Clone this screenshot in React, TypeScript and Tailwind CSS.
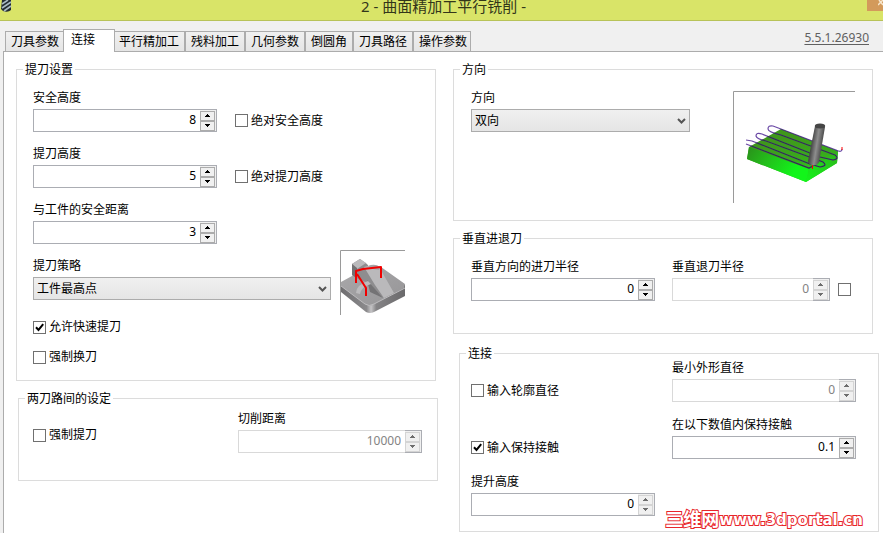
import { useId, useState } from 'react';
import type { ReactNode } from 'react';

const TABS = ['刀具参数', '连接', '平行精加工', '残料加工', '几何参数', '倒圆角', '刀具路径', '操作参数'];

function Group({ title, className = '', children }: { title: string; className?: string; children: ReactNode }) {
  return (
    <fieldset className={`min-w-0 border border-[#dcdcdc] ${className}`}>
      <legend className="ml-1.5 px-0.5 leading-[17px]">{title}</legend>
      {children}
    </fieldset>
  );
}

function Arrow({ up = false }: { up?: boolean }) {
  return (
    <svg width="5" height="3" viewBox="0 0 5 3" fill="currentColor" shapeRendering="crispEdges" aria-hidden="true">
      <path d={up ? 'M2 0h1v1h1v1h1v1H0V2h1V1h1z' : 'M0 0h5v1H4v1H3v1H2V2H1V1H0z'} />
    </svg>
  );
}

type SpinProps = {
  label: string;
  initial: number;
  step?: number;
  disabled?: boolean;
  locked?: boolean;
  width?: string;
};

function SpinField({ label, initial, step = 1, disabled = false, locked = false, width = 'w-46' }: SpinProps) {
  const id = useId();
  const [value, setValue] = useState(String(initial));
  const off = disabled || locked;
  const bump = (d: number) => setValue((v) => String(Math.round(((parseFloat(v) || 0) + d) * 1000) / 1000));
  const button = `flex h-[10px] w-[15px] items-center justify-center border bg-[#f0f0f0] ${
    off ? 'border-[#d4d4d4] text-[#6d6d6d]' : 'border-[#acacac] text-black'
  }`;
  return (
    <div className="flex flex-col gap-[3px]">
      <label htmlFor={id}>{label}</label>
      <div className={`flex h-[23px] ${width}`}>
        <input
          id={id}
          type="text"
          inputMode="decimal"
          value={value}
          disabled={disabled}
          onChange={(e) => setValue(e.target.value)}
          className={`min-w-0 flex-1 border border-r-0 bg-white pr-1 pb-0.5 text-right outline-none ${
            disabled ? 'border-[#d9d9d9] text-[#838383]' : 'border-[#abadb3] text-black'
          }`}
        />
        <div className="flex flex-col justify-center border border-l-0 border-[#abadb3] bg-[#f0f0f0] pr-px">
          <button type="button" aria-label={`${label} +`} disabled={off} onClick={() => bump(step)} className={button}>
            <Arrow up />
          </button>
          <button type="button" aria-label={`${label} -`} disabled={off} onClick={() => bump(-step)} className={button}>
            <Arrow />
          </button>
        </div>
      </div>
    </div>
  );
}

function SelectField({ label, options, width }: { label: string; options: string[]; width: string }) {
  const id = useId();
  return (
    <div className="flex flex-col gap-[3px]">
      <label htmlFor={id}>{label}</label>
      <div className={`relative h-[23px] ${width}`}>
        <select
          id={id}
          className="h-full w-full appearance-none border border-[#acacac] bg-linear-to-b from-[#f0f0f0] to-[#e5e5e5] pr-5 pl-[3px] text-black outline-none"
        >
          {options.map((o) => (
            <option key={o}>{o}</option>
          ))}
        </select>
        <svg
          className="pointer-events-none absolute top-[9px] right-1"
          width="9"
          height="6"
          viewBox="0 0 9 6"
          fill="none"
          stroke="#555"
          strokeWidth="2"
          aria-hidden="true"
        >
          <path d="M1 1l3.500 3.500L8 1" />
        </svg>
      </div>
    </div>
  );
}

function Check({ label, name, initial = false }: { label?: string; name?: string; initial?: boolean }) {
  const [on, setOn] = useState(initial);
  return (
    <label className="flex items-center gap-[3px]">
      <span className="relative flex size-[13px] shrink-0">
        <input
          type="checkbox"
          checked={on}
          aria-label={name}
          onChange={(e) => setOn(e.target.checked)}
          className="size-[13px] appearance-none border border-[#707070] bg-white"
        />
        {on && (
          <svg
            className="pointer-events-none absolute inset-0"
            width="13"
            height="13"
            viewBox="0 0 13 13"
            fill="none"
            stroke="#000"
            strokeWidth="2"
            aria-hidden="true"
          >
            <path d="M3 6.300L5.500 9L10.200 3.200" />
          </svg>
        )}
      </span>
      {label && <span>{label}</span>}
    </label>
  );
}

function RetractPicture() {
  return (
    <svg width="65" height="65" viewBox="0 0 65 65" className="shrink-0" role="img" aria-label="提刀策略">
      <defs>
        <linearGradient id="plate" x1="0" y1="0" x2="1" y2="1">
          <stop offset="0" stopColor="#a9a8aa" />
          <stop offset="1" stopColor="#969597" />
        </linearGradient>
        <linearGradient id="edge" x1="0" x2="1">
          <stop offset="0" stopColor="#6f6e70" />
          <stop offset="0.400" stopColor="#8b8a8c" />
          <stop offset="0.470" stopColor="#c6c5c7" />
          <stop offset="0.550" stopColor="#858486" />
          <stop offset="1" stopColor="#6a696b" />
        </linearGradient>
      </defs>
      <path d="M1 33L12 27L40 18L65 35V46L34 62Q30 64 26 62L1 42z" fill="url(#edge)" />
      <path d="M1 32L12 26L41 17L65 34L64 38L34 54Q29 57 25 54L1 36z" fill="url(#plate)" />
      <path d="M1 36L25 54Q29 57 34 54L65 38" fill="none" stroke="#bdbcbe" />
      <path d="M12 14L20 9L27 14L46 40L43 47L35 41L26 32L16 28L12 25z" fill="#8e8d8f" />
      <path d="M12 14L20 9L26 13L17 19z" fill="#bbbabc" />
      <path d="M12 14L17 18V28L12 25z" fill="#737274" />
      <path d="M24 17L33 15Q40 16 42 22L54 43L44 48L35 35z" fill="#bab9bb" />
      <path d="M28 16Q35 13 40 17L39 20L33 19z" fill="#a5a4a6" />
      <path d="M27 30L43 48L30 42z" fill="#747375" />
      <path d="M16 43Q16 35 28 31L31 34Q21 37 20 44z" fill="#bcbbbd" />
      <path
        d="M16 33V21L23 19L41 17V28M17 24L26 38V46"
        fill="none"
        stroke="#f00000"
        strokeWidth="2"
        strokeLinejoin="round"
      />
      <path d="M.5 65V.5H65" fill="none" stroke="#9a9a9a" />
    </svg>
  );
}

const TOOL_PATH =
  'M109 58Q109 62 103 59L48 38L40 35Q35 34 35 38Q35 41 48 44L102 64Q107 68 100 69L87 66L29 43Q23 41 23 45Q24 48 33 50L90 71Q95 75 87 76L77 73L19 50L13 49M13 53L76 77L80 75';

function DirectionPicture() {
  return (
    <svg width="122" height="112" viewBox="0 0 122 112" className="shrink-0" role="img" aria-label="双向">
      <defs>
        <linearGradient id="top" x1="0.300" y1="0" x2="0.700" y2="1">
          <stop offset="0.200" stopColor="#3f981b" />
          <stop offset="0.600" stopColor="#38ab1c" />
          <stop offset="1" stopColor="#22e01b" />
        </linearGradient>
        <linearGradient id="front" x1="0" y1="0" x2="1" y2="0.400">
          <stop offset="0" stopColor="#2a8f1b" />
          <stop offset="0.400" stopColor="#24bd1b" />
          <stop offset="0.900" stopColor="#12f51a" />
        </linearGradient>
        <linearGradient id="side" x1="0" y1="1" x2="1" y2="0">
          <stop offset="0" stopColor="#12f51a" />
          <stop offset="1" stopColor="#2fb51b" />
        </linearGradient>
        <linearGradient id="mill" gradientUnits="userSpaceOnUse" x1="77" y1="54" x2="90" y2="56">
          <stop offset="0.100" stopColor="#484848" />
          <stop offset="0.500" stopColor="#8d8d8d" />
          <stop offset="0.950" stopColor="#484848" />
        </linearGradient>
        <clipPath id="block">
          <path d="M48 38L105 60L104 72L76 80L14 57z" />
        </clipPath>
      </defs>
      <path d="M48 38L105 60L104 72L73 91L14 68L16 56z" fill="url(#top)" />
      <path d="M16 56L76 78L73 91L14 68z" fill="url(#front)" />
      <path d="M76 78L105 61L104 72L73 91z" fill="url(#side)" />
      <path d={TOOL_PATH} fill="none" stroke="#6a48a5" strokeWidth="1.200" />
      <path d={TOOL_PATH} fill="none" stroke="#2c3a48" strokeWidth="1.200" clipPath="url(#block)" />
      <path d="M109 56v3M79.500 74v4" stroke="#f00" fill="none" />
      <path d="M82 35L92 36L86 71Q84 75 79 74Q75 73 75 70z" fill="url(#mill)" />
      <ellipse cx="87" cy="35" rx="5.200" ry="2.500" fill="#454545" />
      <path d="M.5 112V.5H122" fill="none" stroke="#9a9a9a" />
    </svg>
  );
}

export default function App() {
  const [active, setActive] = useState(1);
  return (
    <div className="relative flex min-h-screen flex-col overflow-hidden bg-[#f0f0f0] font-['Noto_Sans','Noto_Sans_CJK_SC',sans-serif] text-[12px] leading-4 text-black">
      <header className="relative flex h-[21px] items-start justify-between border-b border-[#b8c358] bg-[#d9e468]">
        <svg width="12" height="12" viewBox="0 0 12 12" className="ml-px" aria-hidden="true">
          <path d="M1 0h9v10q-3 3-8 1l-2-2z" fill="#222b31" />
          <path d="M1 4L7 0M1 8L10 2M3 11L10 6" stroke="#a9bbc4" strokeWidth="1.600" />
        </svg>
        <h1 className="-mt-0.5 ml-[7px] text-[15px] leading-4 text-[#33361a]">2 - 曲面精加工平行铣削 -</h1>
        <button type="button" aria-label="关闭" className="flex h-[11px] w-4 justify-end overflow-hidden bg-[#d39a5b]">
          <svg width="5" height="6" viewBox="0 0 5 6" stroke="#f7e6cc" strokeWidth="1.500" aria-hidden="true">
            <path d="M0 5L5 0M1 0L5 5" />
          </svg>
        </button>
      </header>

      <div className="flex h-[31px] items-end justify-between pl-[5px]">
        <div role="tablist" className="flex items-end">
          {TABS.map((t, i) => (
            <button
              key={t}
              type="button"
              role="tab"
              aria-selected={i === active}
              onClick={() => setActive(i)}
              className={
                i === active
                  ? 'z-10 -mx-0.5 h-[23px] border border-b-0 border-[#acacac] bg-white pr-[19px] pb-0.5 pl-[7px]'
                  : 'h-[21px] border border-[#acacac] bg-linear-to-b from-[#f0f0f0] to-[#e5e5e5] px-[5px] last:pr-[3px]'
              }
            >
              {t}
            </button>
          ))}
        </div>
        <a href="#version" className="mr-3.5 mb-1.5 text-[#606060] underline underline-offset-2">
          5.5.1.26930
        </a>
      </div>

      <main
        role="tabpanel"
        className="-mt-px ml-[3px] grid flex-1 grid-cols-[422fr_426fr] items-start gap-x-[15px] border-t border-l border-[#acacac] bg-white pt-[9px] pr-1 pl-3"
      >
        <div className="flex flex-col gap-[9px]">
          <Group title="提刀设置" className="mr-0.5">
            <div className="flex flex-col px-4 pt-3 pb-[15px]">
              <div className="flex flex-col gap-3.5">
                <div className="flex items-end gap-[18px]">
                  <SpinField label="安全高度" initial={8} />
                  <div className="flex h-[23px] items-center">
                    <Check label="绝对安全高度" />
                  </div>
                </div>
                <div className="flex items-end gap-[18px]">
                  <SpinField label="提刀高度" initial={5} />
                  <div className="flex h-[23px] items-center">
                    <Check label="绝对提刀高度" />
                  </div>
                </div>
                <SpinField label="与工件的安全距离" initial={3} />
              </div>
              <div className="mt-1.5 flex items-start gap-[9px]">
                <div className="mt-2">
                  <SelectField label="提刀策略" options={['工件最高点']} width="w-[298px]" />
                </div>
                <RetractPicture />
              </div>
              <div className="mt-1 flex flex-col items-start gap-3.5">
                <Check label="允许快速提刀" initial />
                <Check label="强制换刀" />
              </div>
            </div>
          </Group>

          <Group title="两刀路间的设定" className="ml-0.5">
            <div className="flex items-end justify-between pt-1 pr-[15px] pb-[27px] pl-3.5">
              <div className="pb-2.5">
                <Check label="强制提刀" />
              </div>
              <SpinField label="切削距离" initial={10000} disabled />
            </div>
          </Group>
        </div>

        <div className="flex flex-col gap-[9px]">
          <Group title="方向" className="mr-1.5">
            <div className="flex items-start justify-between px-[17px] pt-3 pb-[17px]">
              <SelectField label="方向" options={['双向', '单向']} width="w-[219px]" />
              <div className="pt-px">
                <DirectionPicture />
              </div>
            </div>
          </Group>

          <Group title="垂直进退刀" className="mr-1.5">
            <div className="flex items-end gap-[17px] px-[17px] pt-3 pb-8">
              <SpinField label="垂直方向的进刀半径" initial={0} />
              <div className="flex items-end gap-2">
                <SpinField label="垂直退刀半径" initial={0} disabled width="w-[158px]" />
                <div className="flex h-[23px] items-center">
                  <Check name="垂直退刀半径" />
                </div>
              </div>
            </div>
          </Group>

          <Group title="连接" className="mt-0.5 ml-1.5">
            <div className="-mt-0.5 grid grid-cols-[184px_auto] items-end justify-start gap-x-[17px] gap-y-[15px] px-[11px] pb-[15px]">
              <div className="flex h-[23px] items-center">
                <Check label="输入轮廓直径" />
              </div>
              <SpinField label="最小外形直径" initial={0} disabled />
              <div className="flex h-[23px] items-center">
                <Check label="输入保持接触" initial />
              </div>
              <SpinField label="在以下数值内保持接触" initial={0.1} step={0.1} />
              <SpinField label="提升高度" initial={0} locked />
            </div>
          </Group>
        </div>
      </main>

      <p className="absolute right-5 bottom-1 flex items-center font-['DejaVu_Sans','Noto_Sans_CJK_SC',sans-serif] text-[15px] leading-[18px] font-bold whitespace-nowrap text-white [paint-order:stroke_fill] [-webkit-text-stroke:2px_#e8262b]">
        <span className="text-[18px]">三维网</span>
        <span>www.3dportal.cn</span>
      </p>
    </div>
  );
}
